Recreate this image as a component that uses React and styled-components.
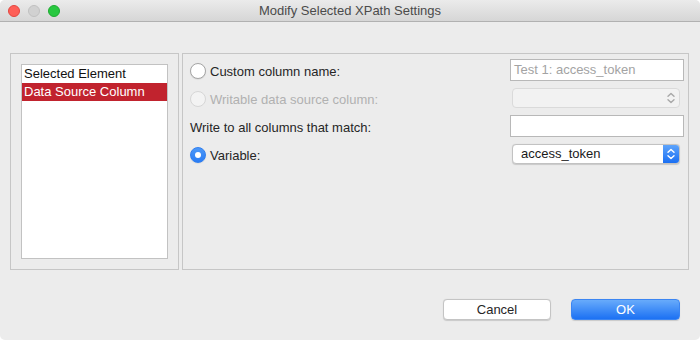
import React from "react";
import styled, { createGlobalStyle } from "styled-components";

const Global = createGlobalStyle`
  html, body { margin: 0; padding: 0; background: #ffffff; }
  body { font-family: "Liberation Sans", Arial, sans-serif; font-size: 13px; color: #262626; }
  * { box-sizing: border-box; }
`;

const Window = styled.div`
  width: 700px;
  height: 340px;
  background: #ececec;
  border-radius: 5px;
  overflow: hidden;
  display: flex;
  flex-direction: column;
`;

const TitleBar = styled.div`
  height: 22px;
  flex: none;
  background: linear-gradient(#ebebeb, #d6d6d6);
  border-bottom: 1px solid #b1b1b1;
  display: flex;
  align-items: center;
  position: relative;
  padding-left: 8px;
`;

const Lights = styled.div`
  display: flex;
  gap: 8px;
`;

const Light = styled.span`
  width: 12px;
  height: 12px;
  border-radius: 50%;
  background: ${(p) => p.$fill};
  border: 1px solid ${(p) => p.$edge};
`;

const Title = styled.div`
  position: absolute;
  left: 0;
  right: 0;
  top: 0;
  height: 21px;
  line-height: 21px;
  text-align: center;
  color: #4b4b4b;
  font-size: 13px;
  pointer-events: none;
`;

const Body = styled.div`
  flex: 1;
  display: flex;
  flex-direction: column;
  padding: 31px 11px 0 10px;
`;

const Panels = styled.div`
  display: flex;
  gap: 3px;
  height: 217px;
`;

const Box = styled.div`
  border: 1px solid #c6c6c6;
  background: #ececec;
`;

const LeftBox = styled(Box)`
  width: 169px;
  padding: 10px;
`;

const List = styled.div`
  width: 100%;
  height: 100%;
  background: #ffffff;
  border: 1px solid #c2c2c2;
`;

const ListItem = styled.div`
  height: 18px;
  line-height: 18px;
  padding-left: 2px;
  white-space: nowrap;
  color: ${(p) => (p.$selected ? "#ffffff" : "#111111")};
  background: ${(p) => (p.$selected ? "#c1232e" : "transparent")};
`;

const RightBox = styled(Box)`
  flex: 1;
  padding: 5px 4px 0 7px;
  display: flex;
  flex-direction: column;
  gap: 6px;
`;

const Row = styled.div`
  height: 22px;
  display: flex;
  align-items: center;
  justify-content: space-between;
`;

const Label = styled.label`
  display: flex;
  align-items: center;
  gap: 4px;
  padding-top: 2px;
  color: ${(p) => (p.$disabled ? "#b1b1b1" : "#262626")};
  white-space: nowrap;
`;

const Radio = styled.span`
  width: 16px;
  height: 16px;
  border-radius: 50%;
  flex: none;
  display: flex;
  align-items: center;
  justify-content: center;
  background: ${(p) =>
    p.$checked ? "linear-gradient(#4c98f8, #2a7cf4)" : p.$disabled ? "#f3f3f3" : "#ffffff"};
  border: 1px solid
    ${(p) => (p.$checked ? "#2f7ef0" : p.$disabled ? "#d6d6d6" : "#a6a6a6")};
  box-shadow: ${(p) => (p.$disabled ? "none" : "0 0.5px 1px rgba(0,0,0,0.12)")};
  &::after {
    content: "";
    display: ${(p) => (p.$checked ? "block" : "none")};
    width: 6px;
    height: 6px;
    border-radius: 50%;
    background: #ffffff;
  }
`;

const Field = styled.div`
  width: 174px;
  height: 22px;
  background: #ffffff;
  border: 1px solid #b8b8b8;
  padding-left: 3px;
  line-height: 20px;
  color: ${(p) => (p.$placeholder ? "#a3a3a3" : "#222")};
  white-space: nowrap;
  overflow: hidden;
`;

const Popup = styled.div`
  width: 168px;
  height: 20px;
  margin-right: 4px;
  border-radius: 4px;
  display: flex;
  overflow: hidden;
  background: ${(p) => (p.$disabled ? "#f2f2f2" : "#ffffff")};
  border: 1px solid ${(p) => (p.$disabled ? "#dadada" : "#c2c2c2")};
  box-shadow: ${(p) => (p.$disabled ? "none" : "0 0.5px 1px rgba(0,0,0,0.15)")};
`;

const PopupText = styled.div`
  flex: 1;
  padding-left: 8px;
  line-height: 18px;
  color: #1a1a1a;
  white-space: nowrap;
`;

const PopupArrows = styled.div`
  width: 16px;
  flex: none;
  display: flex;
  align-items: center;
  justify-content: center;
  background: ${(p) => (p.$active ? "linear-gradient(#5ea4fb, #1a6ff2)" : "transparent")};
  color: ${(p) => (p.$active ? "#ffffff" : "#a8a8a8")};
`;

const Footer = styled.div`
  display: flex;
  justify-content: flex-end;
  gap: 20px;
  padding: 29px 9px 0 0;
`;

const Button = styled.div`
  height: 21px;
  width: ${(p) => p.$w}px;
  border-radius: 4px;
  display: flex;
  align-items: center;
  justify-content: center;
  font-size: 13px;
  color: ${(p) => (p.$primary ? "#ffffff" : "#262626")};
  background: ${(p) => (p.$primary ? "linear-gradient(#68abfb, #1c71f3)" : "#ffffff")};
  border: 1px solid ${(p) => (p.$primary ? "#3b85f2" : "#c4c4c4")};
  box-shadow: 0 0.5px 1px rgba(0, 0, 0, 0.15);
`;

const Chevrons = () => (
  <svg width="8" height="12" viewBox="0 0 8 12" fill="none" stroke="currentColor" strokeWidth="1.4" strokeLinecap="round" strokeLinejoin="round">
    <path d="M1 4.2 L4 1.4 L7 4.2" />
    <path d="M1 7.8 L4 10.6 L7 7.8" />
  </svg>
);

export default function App() {
  return (
    <>
      <Global />
      <Window>
        <TitleBar>
          <Lights>
            <Light $fill="#fe5f57" $edge="#e2463f" />
            <Light $fill="#d1d1d1" $edge="#c0c0c0" />
            <Light $fill="#28c840" $edge="#1eaa31" />
          </Lights>
          <Title>Modify Selected XPath Settings</Title>
        </TitleBar>
        <Body>
          <Panels>
            <LeftBox>
              <List>
                <ListItem>Selected Element</ListItem>
                <ListItem $selected>Data Source Column</ListItem>
              </List>
            </LeftBox>
            <RightBox>
              <Row>
                <Label>
                  <Radio />
                  Custom column name:
                </Label>
                <Field $placeholder>Test 1: access_token</Field>
              </Row>
              <Row>
                <Label $disabled>
                  <Radio $disabled />
                  Writable data source column:
                </Label>
                <Popup $disabled>
                  <PopupText />
                  <PopupArrows>
                    <Chevrons />
                  </PopupArrows>
                </Popup>
              </Row>
              <Row>
                <Label>Write to all columns that match:</Label>
                <Field />
              </Row>
              <Row>
                <Label>
                  <Radio $checked />
                  Variable:
                </Label>
                <Popup>
                  <PopupText>access_token</PopupText>
                  <PopupArrows $active>
                    <Chevrons />
                  </PopupArrows>
                </Popup>
              </Row>
            </RightBox>
          </Panels>
          <Footer>
            <Button $w={108}>Cancel</Button>
            <Button $w={109} $primary>OK</Button>
          </Footer>
        </Body>
      </Window>
    </>
  );
}
